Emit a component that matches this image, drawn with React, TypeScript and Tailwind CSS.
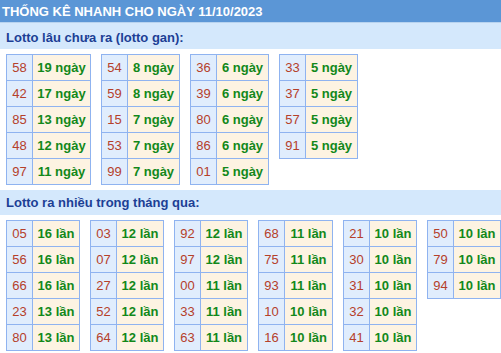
const font = "font-['Liberation_Sans',Arial,sans-serif]";

type Row = [string, string];

const ganTables: { w: string; rows: Row[] }[] = [
  {
    w: "w-[57px]",
    rows: [
      ["58", "19 ngày"],
      ["42", "17 ngày"],
      ["85", "13 ngày"],
      ["48", "12 ngày"],
      ["97", "11 ngày"],
    ],
  },
  {
    w: "w-[51px]",
    rows: [
      ["54", "8 ngày"],
      ["59", "8 ngày"],
      ["15", "7 ngày"],
      ["53", "7 ngày"],
      ["99", "7 ngày"],
    ],
  },
  {
    w: "w-[51px]",
    rows: [
      ["36", "6 ngày"],
      ["39", "6 ngày"],
      ["80", "6 ngày"],
      ["86", "6 ngày"],
      ["01", "5 ngày"],
    ],
  },
  {
    w: "w-[51px]",
    rows: [
      ["33", "5 ngày"],
      ["37", "5 ngày"],
      ["57", "5 ngày"],
      ["91", "5 ngày"],
    ],
  },
];

const nhieuTables: { w: string; rows: Row[] }[] = [
  {
    w: "w-[46px]",
    rows: [
      ["05", "16 lần"],
      ["56", "16 lần"],
      ["66", "16 lần"],
      ["23", "13 lần"],
      ["80", "13 lần"],
    ],
  },
  {
    w: "w-[46px]",
    rows: [
      ["03", "12 lần"],
      ["07", "12 lần"],
      ["27", "12 lần"],
      ["52", "12 lần"],
      ["64", "12 lần"],
    ],
  },
  {
    w: "w-[46px]",
    rows: [
      ["92", "12 lần"],
      ["97", "12 lần"],
      ["00", "11 lần"],
      ["33", "11 lần"],
      ["63", "11 lần"],
    ],
  },
  {
    w: "w-[47px]",
    rows: [
      ["68", "11 lần"],
      ["75", "11 lần"],
      ["93", "11 lần"],
      ["10", "10 lần"],
      ["16", "10 lần"],
    ],
  },
  {
    w: "w-[46px]",
    rows: [
      ["21", "10 lần"],
      ["30", "10 lần"],
      ["31", "10 lần"],
      ["32", "10 lần"],
      ["41", "10 lần"],
    ],
  },
  {
    w: "w-[46px]",
    rows: [
      ["50", "10 lần"],
      ["79", "10 lần"],
      ["94", "10 lần"],
    ],
  },
];

const LottoTable: React.FC<{ w: string; rows: Row[] }> = ({ w, rows }) => (
  <div className="shrink-0 self-start border-t border-l border-r border-[#8fb3f0]">
    {rows.map(([num, count]) => (
      <div key={num} className="flex h-[26px] border-b border-[#8fb3f0]">
        <div className="w-[26px] border-r border-[#8fb3f0] bg-[#e0edfd] flex items-center justify-center text-[13px] text-[#b5402a]">
          {num}
        </div>
        <div
          className={`${w} bg-[#fdf3e2] flex items-center justify-center whitespace-nowrap text-[13px] font-bold text-[#12881a]`}
        >
          {count}
        </div>
      </div>
    ))}
  </div>
);

export default function App() {
  return (
    <div className={`${font} w-[501px] h-[353px] overflow-hidden bg-white`}>
      <div className="h-[23px] bg-[#5b96d6] border-b border-[#b8d3ef] flex items-center pl-[2px] pt-[2px] text-[13px] font-bold text-white whitespace-nowrap">
        THỐNG KÊ NHANH CHO NGÀY 11/10/2023
      </div>

      <div className="h-[26px] bg-[#d4e8fc] flex items-center pl-[6px] pt-[3px] text-[13px] font-bold text-[#1c3f95]">
        Lotto lâu chưa ra (lotto gan):
      </div>
      <div className="flex gap-[10px] pl-[6px] mt-[5px]">
        {ganTables.map((t, i) => (
          <LottoTable key={i} w={t.w} rows={t.rows} />
        ))}
      </div>

      <div className="h-[25px] mt-[5px] bg-[#d4e8fc] flex items-center pl-[6px] text-[13px] font-bold text-[#1c3f95]">
        Lotto ra nhiều trong tháng qua:
      </div>
      <div className="flex gap-[10px] pl-[6px] mt-[5px]">
        {nhieuTables.map((t, i) => (
          <LottoTable key={i} w={t.w} rows={t.rows} />
        ))}
      </div>
    </div>
  );
}
